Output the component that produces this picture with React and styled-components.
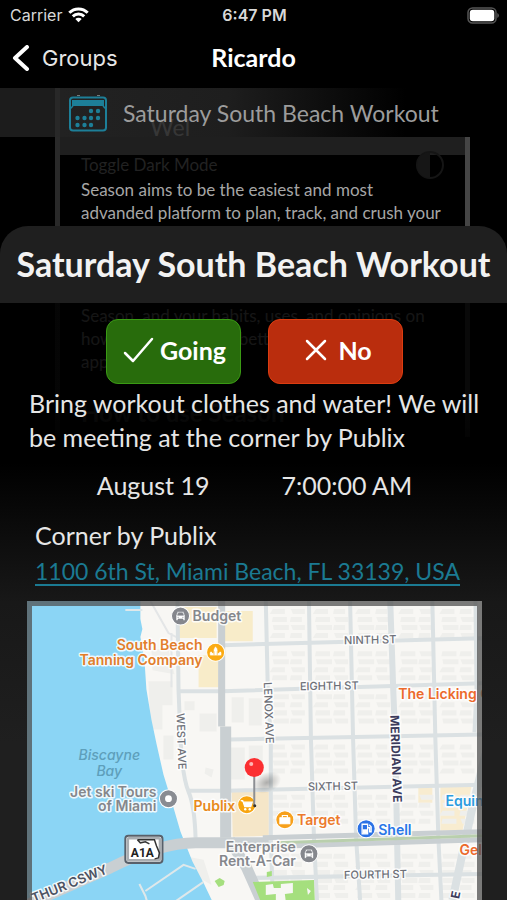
import styled, { createGlobalStyle } from "styled-components"

const GlobalStyle = createGlobalStyle`
    * {
        box-sizing: border-box;
    }
    body {
        margin: 0;
        background: #000000;
    }
    h1, h2, p {
        margin: 0;
    }
`

const Screen = styled.div`
    display: flex;
    flex-direction: column;
    height: 100vh;
    min-height: 700px;
    overflow: hidden;
    background: #000000;
    color: #e6e6e6;
    font-family: Lato, "Open Sans", sans-serif;
`

const StatusBar = styled.div`
    display: grid;
    grid-template-columns: 1fr auto 1fr;
    align-items: center;
    height: 30px;
    padding: 0 8px 0 10px;
    font-family: Inter, sans-serif;
    font-size: 16px;
    color: #d8d8d8;
`

const Carrier = styled.div`
    display: flex;
    align-items: center;
    gap: 6px;
`

const Clock = styled.div`
    font-weight: 600;
`

const Battery = styled.svg`
    justify-self: end;
`

const NavBar = styled.header`
    display: grid;
    grid-template-columns: 1fr auto 1fr;
    align-items: center;
    height: 58px;
    padding: 0 12px 2px;
`

const BackButton = styled.button`
    display: flex;
    align-items: center;
    gap: 12px;
    padding: 0;
    border: 0;
    background: none;
    color: #e6e6e6;
    font-family: Inter, sans-serif;
    font-size: 22px;
    cursor: pointer;
`

const NavTitle = styled.h1`
    padding-bottom: 2px;
    font-size: 25px;
    font-weight: 700;
    color: #ffffff;
`

const Stage = styled.main`
    display: grid;
    grid-template: minmax(0, 1fr) / minmax(0, 1fr);
    flex: 1;
    min-height: 0;
`

/* Everything behind the sheet shares one grid cell with it */
const Backdrop = styled.div`
    grid-area: 1 / 1;
`

const EventRow = styled.div`
    position: relative;
    display: flex;
    align-items: center;
    gap: 15px;
    height: 49px;
    padding-left: 68px;
    background: linear-gradient(90deg, #1c1c1c 55px, #282828 55px, #282828 60px, #222222 60px, #1e1e1e 45%, #000000 80%);
    font-size: 23px;
    color: #9c9c9c;
`

const FadedTitle = styled.span`
    position: absolute;
    bottom: -4px;
    left: 150px;
    color: #ffffff;
    opacity: 0.1;
`

const Panel = styled.div`
    height: 300px;
    margin: 0 37px 0 55px;
    border: solid #454545;
    border-width: 0 5px;
    border-left-color: #292929;
    font-size: 17px;
    line-height: 23px;
`

const PanelTop = styled.div`
    height: 18px;
    background: #1f1f1f;
`

const PanelBody = styled.div`
    padding: 0 21px;
`

const ToggleRow = styled.div`
    display: flex;
    align-items: center;
    justify-content: space-between;
    height: 19px;
    margin-bottom: 4px;
    color: #222222;
`

const Blurb = styled.p`
    margin-bottom: ${(props) => (props.$gap ? "80px" : "28px")};
    color: #a6a6a6;
`

const GhostHeading = styled.p`
    font-size: 24px;
    font-weight: 700;
    color: #5c5c5c;
`

const Sheet = styled.section`
    position: relative;
    grid-area: 1 / 1;
    display: flex;
    flex-direction: column;
    min-height: 0;
    margin-top: 138px;
`

const SheetHeader = styled.header`
    flex: none;
    display: flex;
    align-items: center;
    justify-content: center;
    height: 77px;
    padding-bottom: 2px;
    border-radius: 28px 28px 0 0;
    background: #1f1f1f;
`

const SheetTitle = styled.h2`
    font-size: 34px;
    font-weight: 700;
    color: #f2f2f2;
    white-space: nowrap;
`

const SheetBody = styled.div`
    display: flex;
    flex: 1;
    flex-direction: column;
    min-height: 0;
    padding: 16px 25px 0 27px;
    background: linear-gradient(rgba(0, 0, 0, 0.87) 90px, #000000 160px, #181818 300px, #1f1f1f 440px);
    font-size: 25px;
    line-height: 34px;
`

const Answers = styled.div`
    display: flex;
    justify-content: center;
    gap: 27px;
`

const AnswerButton = styled.button`
    display: flex;
    align-items: center;
    justify-content: center;
    gap: ${(props) => (props.$yes ? "6px" : "11px")};
    width: 135px;
    height: 65px;
    padding: ${(props) => (props.$yes ? "0 0 3px 2px" : "0 0 3px 6px")};
    border: 1px solid ${(props) => (props.$yes ? "#3a9a14" : "#dc3c10")};
    border-radius: 12px;
    background: ${(props) => (props.$yes ? "#286c0c" : "#ba2d0d")};
    color: #ffffff;
    font-family: inherit;
    font-size: 25px;
    font-weight: 700;
    cursor: pointer;
`

const Details = styled.p`
    padding: 2px 2px 0;
`

const When = styled.div`
    display: flex;
    justify-content: center;
    gap: 72px;
    margin-top: 14px;
`

const Place = styled.div`
    display: flex;
    flex-direction: column;
    align-items: flex-start;
    gap: 2px;
    padding: 16px 8px 13px;
`

const AddressLink = styled.a`
    color: #1b7a92;
    font-size: 23px;
    text-decoration: underline;
    text-decoration-thickness: 2px;
    text-underline-offset: 4px;
    text-decoration-skip-ink: none;
`

const MapFrame = styled.div`
    position: relative;
    flex: 1;
    min-height: 0;
    overflow: hidden;

    &::after {
        content: "";
        position: absolute;
        inset: 0;
        border: solid rgba(80, 80, 80, 0.75);
        border-width: 5px 5px 0;
    }
`

const MapSvg = styled.svg`
    display: block;
    width: 100%;
    height: 100%;
    font-family: Inter, sans-serif;

    text {
        paint-order: stroke;
        stroke: rgba(255, 255, 255, 0.85);
        stroke-width: 3px;
        stroke-linejoin: round;
    }
`

const WifiIcon = () => (
    <svg width="21" height="16" viewBox="0 0 21 16" fill="none" stroke="#ffffff" strokeWidth="3">
        <path d="M1.3 5.8a13 13 0 0 1 18.4 0" />
        <path d="M4.8 9.4a8 8 0 0 1 11.4 0" />
        <path d="M10.5 15.2 7.3 12a4.6 4.6 0 0 1 6.4 0z" fill="#ffffff" stroke="none" />
    </svg>
)

const BatteryIcon = () => (
    <Battery width="32" height="17" viewBox="0 0 32 17">
        <rect x="1" y="1" width="28" height="15" rx="4.5" fill="none" stroke="#555555" strokeWidth="1.5" />
        <rect x="2.8" y="2.8" width="24.5" height="11.4" rx="3" fill="#ffffff" />
        <path d="M30.4 6q1.4.6 1.4 2.5t-1.4 2.5z" fill="#666666" />
    </Battery>
)

const DOTS = [[23, 17], [30, 17], [9.5, 24], [16.5, 24], [23, 24], [30, 24], [9.5, 31], [16.5, 31], [23, 31]]

const CalendarIcon = () => (
    <svg width="40" height="38" viewBox="0 0 40 38" fill="none">
        <path d="M9 1.5h3M29 1.5h3" stroke="#777777" />
        <rect x="2" y="3.5" width="36" height="33" rx="3" stroke="#1d7f98" strokeWidth="2" />
        <path d="M4 6h32v6H4z" fill="#1d7f98" />
        <path d="M2 15l3-3M38 15l-3-3" stroke="#1d7f98" strokeWidth="1.5" />
        {DOTS.map(([x, y]) => (
            <circle key={`${x}-${y}`} cx={x} cy={y} r="2.2" fill="#1d7f98" />
        ))}
    </svg>
)

const HalfCircleIcon = () => (
    <svg width="28" height="28" viewBox="0 0 28 28">
        <circle cx="14" cy="14" r="13" fill="none" stroke="#151515" strokeWidth="2" />
        <path d="M14 1a13 13 0 0 0 0 26z" fill="#161616" />
    </svg>
)

// streets as drawn on the map, [path, width]
const STREETS = [
    ["M177 602 178 690 180 740Q182 778 188 792T195 838", 4],
    ["M265 602 267 690 270 740V838L272 900", 4],
    ["M308 602 310 740 313 838 316 900", 4],
    ["M349 602 352 740 355 838 359 900", 4],
    ["M389 602 392 690 394 740 397 900", 6],
    ["M431 602 434 740 437 838 440 900", 4],
    ["M474 602 475 690 473 733", 4],
    ["M222 646 482 639", 4],
    ["M178 692H222L482 684", 4],
    ["M228 740 482 735", 4],
    ["M188 791H226L482 785", 4],
    ["M250 878 482 874", 4],
    ["M484 754 470 812 451 900", 8],
]

const WIDE = [
    ["M221 602V727", 7],
    ["M225 727V838", 11],
    ["M229 840 246 868 262 904", 11],
    ["M24 906 110 868Q160 843 195 843H268", 11],
    ["M262 838 482 832", 5],
    ["M262 847 482 840", 5],
]

const COLUMNS = [269, 312, 354, 397, 438]
const ROWS = [606, 648, 691, 741, 791, 850, 881]

const LABELS = [
    { x: 343, y: 645, size: 11, fill: "#6d7078", text: "NINTH ST", turn: -1 },
    { x: 299, y: 691, size: 11, fill: "#6d7078", text: "EIGHTH ST", turn: -1 },
    { x: 307, y: 791, size: 11, fill: "#6d7078", text: "SIXTH ST", turn: -1 },
    { x: 343, y: 879, size: 11, fill: "#6d7078", text: "FOURTH ST", turn: -1 },
    { x: 263, y: 683, size: 11, fill: "#6d7078", text: "LENOX AVE", turn: 88 },
    { x: 176, y: 714, size: 11, fill: "#6d7078", text: "WEST AVE", turn: 88 },
    { x: 389, y: 716, size: 12, fill: "#3b3b5c", text: "MERIDIAN AVE", turn: 88, weight: 700 },
    { x: 459, y: 892, size: 12, fill: "#3b3b5c", text: "E", turn: -78, weight: 700, anchor: "end" },
    { x: 108, y: 873, size: 13, fill: "#4b5262", text: "THUR CSWY", turn: -22, weight: 600, anchor: "end" },
    { x: 192, y: 622, size: 14, fill: "#85878c", text: "Budget", weight: 600 },
    { x: 202, y: 651, size: 14, fill: "#e27e2b", text: "South Beach", weight: 600, anchor: "end" },
    { x: 202, y: 666, size: 14, fill: "#e27e2b", text: "Tanning Company", weight: 600, anchor: "end" },
    { x: 397, y: 700, size: 14, fill: "#ec6a2c", text: "The Licking C", weight: 600 },
    { x: 156, y: 797, size: 14, fill: "#85878c", text: "Jet ski Tours", weight: 600, anchor: "end" },
    { x: 156, y: 811, size: 14, fill: "#85878c", text: "of Miami", weight: 600, anchor: "end" },
    { x: 193, y: 811, size: 14, fill: "#e88a1c", text: "Publix", weight: 600 },
    { x: 296, y: 825, size: 14, fill: "#ec7a2c", text: "Target", weight: 600 },
    { x: 377, y: 835, size: 14, fill: "#2877e8", text: "Shell", weight: 600 },
    { x: 444, y: 806, size: 14, fill: "#2c9ce0", text: "Equin", weight: 600 },
    { x: 458, y: 855, size: 14, fill: "#ec6a2c", text: "Gel", weight: 600 },
    { x: 295, y: 852, size: 14, fill: "#85878c", text: "Enterprise", weight: 600, anchor: "end" },
    { x: 295, y: 866, size: 14, fill: "#85878c", text: "Rent-A-Car", weight: 600, anchor: "end" },
]

const CarGlyph = () => (
    <path
        d="M-4.5-.5-3-4.5h6l1.5 4v5h-2v-1.5h-5v1.5h-2zM-3-.8h6L2-3.2h-4zM-3 1.3h1.4M1.6 1.3H3"
        fill="#ffffff"
        fillRule="evenodd"
        stroke="#7d8087"
        strokeWidth=".6"
    />
)

const Poi = ({ x, y, color, children }) => (
    <g transform={`translate(${x} ${y})`}>
        <circle r="9" fill={color} stroke="#ffffff" strokeWidth="1" />
        {children}
    </g>
)

const AreaMap = () => (
    <MapSvg viewBox="27 602 455 298" preserveAspectRatio="xMinYMin slice" role="img" aria-label="Map around Publix">
        <path d="M27 602h455v900H27z" fill="#f8f7f4" />
        <path d="M178 608h38v31h-38zM198 656h20v32h-20zM224 612h28v30h-28z" fill="#f8ecc9" />
        <path d="M417 788h14v15h-14zM439 787h31l-9 44h-22z" fill="#f8ecd0" />
        <g fill="#efefec">
            {COLUMNS.map((x) =>
                ROWS.map((y, row) => (
                    <g key={`${x}-${y}`}>
                        {[4, 12, 20, 28].map((dy, i) => (
                            <path key={dy} d={`M${x + 3} ${y + dy}h${12 + ((i + row) % 3) * 2}v5h-15zM${x + 21} ${y + dy}h${11 + ((i + x) % 2) * 3}v5h-12z`} />
                        ))}
                    </g>
                ))
            )}
            <path d="M148 682h24v24h-10v24h-12zM163 736h10v24h-10zM184 702h10v9h-10zM199 714h17v18h-17zM231 698h12v25h-12zM248 699h13v27h-13zM230 748h14v32h-14zM248 746h14v17h-14zM205 768l8 2-2 8-7-4zM151 650h17l6 25-22-4zM182 856l21 4 8 25-14-8z" />
        </g>
        <path d="M150 602l18 32 8 4M171 634v54" fill="none" stroke="#e4e6e7" strokeWidth="2" />
        <path d="M27 602H140V620L142 630 140 638 144 660 146 690 151 720 156 744 163 775 171 801 180 832 192 862 203 883 213 904H27z" fill="#8bd5f5" />
        <path d="M125 611h17M139 884l6 12 3 10M145 891l38-26 12 4M174 902l29-20" fill="none" stroke="#dfe8ea" strokeWidth="2" />
        <path d="M231 792h37v44l-36 1z" fill="#f5e6c8" />
        <g fill="none" stroke="#dbe1e3">
            {STREETS.map(([d, width]) => (
                <path key={d} d={d} strokeWidth={width} />
            ))}
        </g>
        <g fill="none" stroke="#c9cfd2" strokeLinejoin="round">
            {WIDE.map(([d, width]) => (
                <path key={d} d={d} strokeWidth={width} />
            ))}
        </g>
        <path d="M276 843 482 836" stroke="#b9cfad" strokeWidth="3" />
        <path d="M252 882l61-2 1 24h-53zM214 881l5-3 5 3-1 4-5 2zM266 872l5-1v5l-5 1z" fill="#a5df7e" />
        <path d="M265 885l7-1 1 4h7v-4l12-1v10l-8 1 1 8h-10v-8l-10 1zM306 888l4 3-3 4z" fill="#f7f7f4" />
        <g fill="#5e9fbb" fontSize="14" fontStyle="italic" fontWeight="500" textAnchor="middle">
            <text x="109" y="760" style={{ stroke: "none" }}>Biscayne</text>
            <text x="109" y="776" style={{ stroke: "none" }}>Bay</text>
        </g>
        {LABELS.map((label) => (
            <text
                key={label.text + label.y}
                x={label.x}
                y={label.y}
                fill={label.fill}
                fontSize={label.size}
                fontWeight={label.weight || 500}
                textAnchor={label.anchor || "start"}
                transform={label.turn ? `rotate(${label.turn} ${label.x} ${label.y})` : undefined}
            >
                {label.text}
            </text>
        ))}
        <Poi x={180} y={617} color="#85878d"><CarGlyph /></Poi>
        <Poi x={308} y={854} color="#85878d"><CarGlyph /></Poi>
        <Poi x={168} y={799} color="#898c92"><circle r="3.4" fill="#ffffff" /></Poi>
        <Poi x={215} y={653} color="#fbab14">
            <path d="M-5.5 3.5Q-7 0-4.5-1L-2.5 1Q-2.5-4 0-6 2.5-4 2.5 1L4.5-1Q7 0 5.5 3.5zM-1.6 3V-1M1.6 3V-1" fill="#ffffff" stroke="#fbab14" strokeWidth=".6" />
        </Poi>
        <Poi x={284} y={820} color="#f7a01b">
            <path d="M-5-2H5V4H-5z" fill="#ffffff" stroke="#ffffff" strokeWidth="1" strokeLinejoin="round" />
            <path d="M-2.5-2v-2.2h5V-2" fill="none" stroke="#ffffff" strokeWidth="1.2" />
        </Poi>
        <Poi x={365} y={829} color="#2b72e6">
            <path d="M-4 5V-4.5h5.5V5zM2-1h1.500v4H5v-5L3-4" fill="none" stroke="#ffffff" strokeWidth="1.3" />
            <path d="M-3.5.5h5V5h-5z" fill="#ffffff" />
        </Poi>
        <Poi x={246} y={805} color="#f8a50f">
            <path d="M-6-4h2l2 6h6l1.5-4.5H-3.5" fill="#ffffff" stroke="#ffffff" strokeWidth="1.2" />
            <circle cx="-1.5" cy="4.5" r="1.2" fill="#ffffff" />
            <circle cx="3" cy="4.5" r="1.2" fill="#ffffff" />
        </Poi>
        <g>
            <rect x="125" y="836" width="37" height="27" rx="3" fill="#ffffff" stroke="#58606a" strokeWidth="2" />
            <rect x="127.5" y="838.5" width="32" height="22" rx="1" fill="none" stroke="#a9adb1" strokeWidth="2.5" />
            <path d="M137 840h17l2 6 3 7-1 5-4 1M137 840l3 3 5-1 4 2" fill="none" stroke="#333333" strokeWidth="1.5" />
            <text x="142" y="857" fill="#222222" fontFamily="Roboto" fontSize="12" fontWeight="700" textAnchor="middle">A1A</text>
        </g>
        <defs>
            <radialGradient id="pinShade">
                <stop offset="0" stopColor="#000000" stopOpacity=".3" />
                <stop offset="1" stopColor="#000000" stopOpacity="0" />
            </radialGradient>
        </defs>
        <ellipse cx="266" cy="783" rx="15" ry="10" fill="url(#pinShade)" transform="rotate(-25 266 783)" />
        <path d="M253.5 775v31" stroke="#8d8f93" strokeWidth="2" />
        <circle cx="254" cy="806" r="1.5" fill="#333333" />
        <circle cx="253.5" cy="768" r="9.5" fill="#fb2f31" />
        <circle cx="250.5" cy="764.5" r="2" fill="#ffb6b4" />
    </MapSvg>
)

const App = () => {
    return (
        <Screen>
            <GlobalStyle />
            <StatusBar>
                <Carrier>
                    Carrier <WifiIcon />
                </Carrier>
                <Clock>6:47 PM</Clock>
                <BatteryIcon />
            </StatusBar>
            <NavBar>
                <BackButton type="button">
                    <svg width="18" height="26" viewBox="0 0 18 26" fill="none" stroke="#ffffff" strokeWidth="4" strokeLinecap="round" strokeLinejoin="round">
                        <path d="M15 2 3 13l12 11" />
                    </svg>
                    Groups
                </BackButton>
                <NavTitle>Ricardo</NavTitle>
            </NavBar>
            <Stage>
                <Backdrop>
                    <EventRow>
                        <CalendarIcon />
                        Saturday South Beach Workout
                        <FadedTitle>Wel</FadedTitle>
                    </EventRow>
                    <Panel>
                        <PanelTop />
                        <PanelBody>
                            <ToggleRow>
                                Toggle Dark Mode
                                <HalfCircleIcon />
                            </ToggleRow>
                            <Blurb $gap>
                                Season aims to be the easiest and most advanded platform to plan, track, and crush your
                            </Blurb>
                            <Blurb>
                                Season, and your habits, uses, and opinions on how to make Season better
                                <br />
                                appreciated
                            </Blurb>
                            <GhostHeading>How to use Season</GhostHeading>
                        </PanelBody>
                    </Panel>
                </Backdrop>
                <Sheet>
                    <SheetHeader>
                        <SheetTitle>Saturday South Beach Workout</SheetTitle>
                    </SheetHeader>
                    <SheetBody>
                        <Answers>
                            <AnswerButton type="button" $yes>
                                <svg width="31" height="26" viewBox="0 0 31 26" fill="none" stroke="#ffffff" strokeWidth="2.5" strokeLinecap="round" strokeLinejoin="round">
                                    <path d="M2 16l8 8L29 2" />
                                </svg>
                                Going
                            </AnswerButton>
                            <AnswerButton type="button">
                                <svg width="22" height="22" viewBox="0 0 22 22" fill="none" stroke="#ffffff" strokeWidth="2.5" strokeLinecap="round">
                                    <path d="M2 2l18 18M20 2 2 20" />
                                </svg>
                                No
                            </AnswerButton>
                        </Answers>
                        <Details>
                            Bring workout clothes and water! We will be meeting at the corner by Publix
                        </Details>
                        <When>
                            <span>August 19</span>
                            <span>7:00:00 AM</span>
                        </When>
                        <Place>
                            <p>Corner by Publix</p>
                            <AddressLink href="#map">1100 6th St, Miami Beach, FL 33139, USA</AddressLink>
                        </Place>
                        <MapFrame id="map">
                            <AreaMap />
                        </MapFrame>
                    </SheetBody>
                </Sheet>
            </Stage>
        </Screen>
    )
}

export default App
